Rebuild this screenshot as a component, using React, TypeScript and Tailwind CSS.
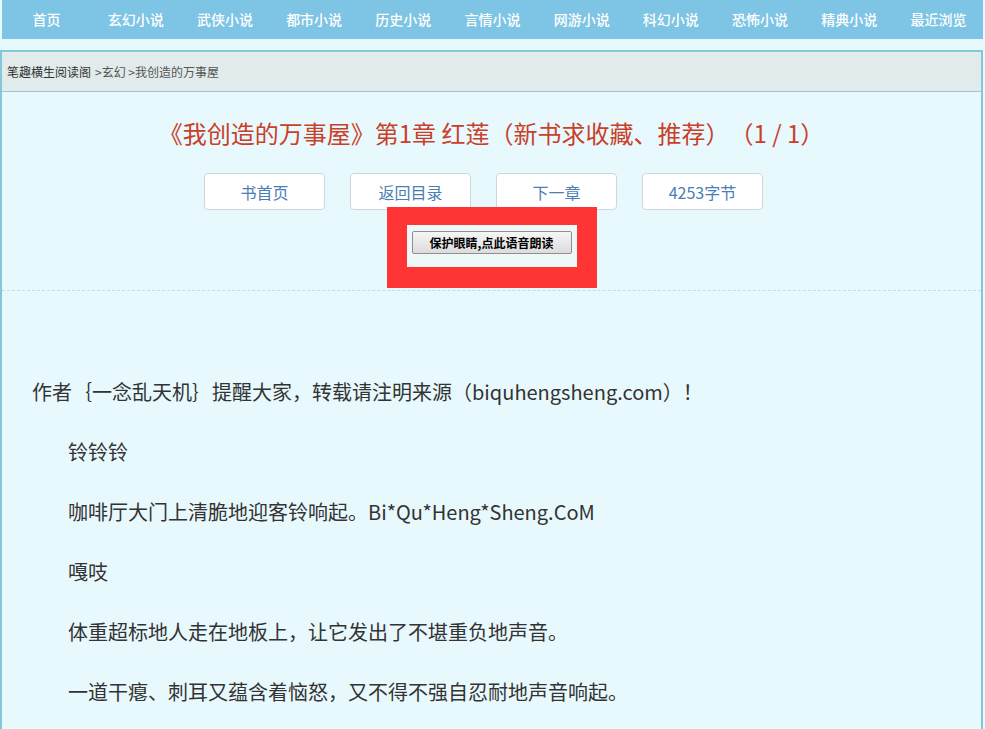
import React from 'react';

const navItems = ['首页', '玄幻小说', '武侠小说', '都市小说', '历史小说', '言情小说', '网游小说', '科幻小说', '恐怖小说', '精典小说', '最近浏览'];

const paragraphs = [
  '铃铃铃',
  '咖啡厅大门上清脆地迎客铃响起。Bi*Qu*Heng*Sheng.CoM',
  '嘎吱',
  '体重超标地人走在地板上，让它发出了不堪重负地声音。',
  '一道干瘪、刺耳又蕴含着恼怒，又不得不强自忍耐地声音响起。',
];

const App: React.FC = () => {
  return (
    <div className="h-[729px] overflow-hidden bg-[#e8f9fd] text-[#333] font-['Noto_Sans_CJK_SC','Noto_Sans',sans-serif] [text-spacing-trim:space-all]">
      {/* Top nav */}
      <nav className="mx-[2px] h-[39px] bg-[#7ec4e4] grid grid-cols-11">
        {navItems.map((item) => (
          <a key={item} className="flex items-center justify-center text-white text-[14px] font-medium">
            {item}
          </a>
        ))}
      </nav>

      {/* Reading box */}
      <div className="mt-[11px] mr-[2px] border-2 border-[#82c8da] bg-[#e8f9fd] min-h-[700px]">
        <div className="h-[40px] bg-[#e1ebeb] border-t border-[#e4f3ea] border-b border-b-[#9cc6d2] px-[5px] flex items-center text-[12px] text-[#333]">
          <span>笔趣横生阅读阁</span>
          <span className="text-[#555] ml-[4px]">&gt;玄幻 &gt;我创造的万事屋</span>
        </div>

        <h1 className="pt-[25px] text-center text-[24px] leading-[32px] text-[#c8402a]">
          《我创造的万事屋》第1章 红莲（新书求收藏、推荐）（1 / 1）
        </h1>

        <div className="mt-[24px] flex justify-center gap-[25px] pr-[16px]">
          {['书首页', '返回目录', '下一章', '4253字节'].map((b) => (
            <a
              key={b}
              className="w-[121px] h-[37px] flex items-center justify-center bg-white border border-[#cdd7dc] rounded-[4px] text-[16px] text-[#4a7eb4]"
            >
              {b}
            </a>
          ))}
        </div>

        <div className="mt-[21px] flex justify-center">
          <div className="relative">
            {/* red highlight around the read-aloud button */}
            <div className="absolute left-[-25px] right-[-25px] top-[-24px] bottom-[-34px] bg-[#ff3535]" />
            <div className="absolute left-[-5px] right-[-5px] top-[-6px] bottom-[-13px] bg-[#eef8f8]" />
            <button className="relative w-[160px] h-[23px] border border-[#8f8f8f] rounded-[2px] bg-gradient-to-b from-[#f6f6f6] to-[#dcdcdc] text-[12px] font-bold text-black flex items-center justify-center">
              保护眼睛,点此语音朗读
            </button>
          </div>
        </div>

        <div className="mt-[36px] border-b border-dashed border-[#cadbe0]" />

        <div className="pt-[86px] px-[30px] text-[20px] leading-[30px] text-[#333]">
          <p className="mb-[30px]">作者｛一念乱天机｝提醒大家，转载请注明来源（biquhengsheng.com）！</p>
          {paragraphs.map((p, i) => (
            <p key={i} className="mb-[30px] pl-[36px]">
              {p}
            </p>
          ))}
        </div>
      </div>
    </div>
  );
};

export default App;
